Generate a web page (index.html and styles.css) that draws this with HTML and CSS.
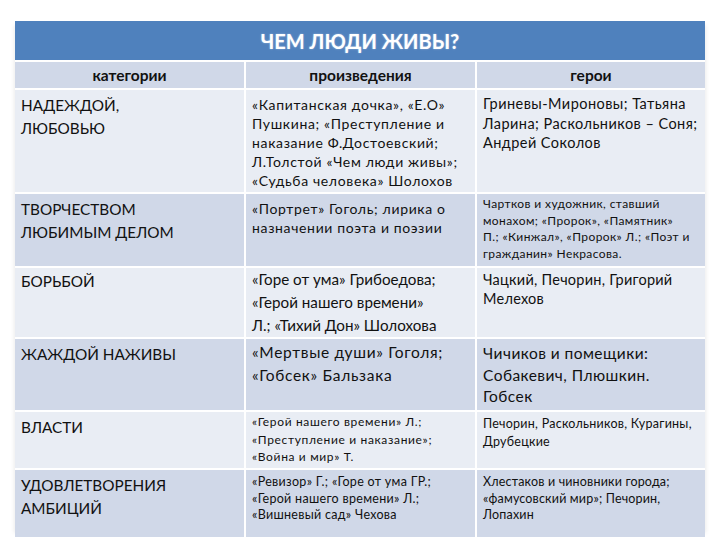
FILE: index.html
```html
<!DOCTYPE html>
<html lang="ru">
<head>
<meta charset="utf-8">
<title>Чем люди живы?</title>
<link rel="stylesheet" href="styles.css">
</head>
<body>
<div class="sheet">
  <div class="title">ЧЕМ ЛЮДИ ЖИВЫ?</div>
  <div class="head">категории</div>
  <div class="head">произведения</div>
  <div class="head">герои</div>

  <div class="cell light cat">НАДЕЖДОЙ,<br>ЛЮБОВЬЮ</div>
  <div class="cell light w-a">«Капитанская дочка», «Е.О»<br>Пушкина; «Преступление и<br>наказание Ф.Достоевский;<br>Л.Толстой «Чем люди живы»;<br>«Судьба человека» Шолохов</div>
  <div class="cell light h-a">Гриневы-Мироновы; Татьяна<br>Ларина; Раскольников – Соня;<br>Андрей Соколов</div>

  <div class="cell dark cat">ТВОРЧЕСТВОМ<br>ЛЮБИМЫМ ДЕЛОМ</div>
  <div class="cell dark w-a">«Портрет» Гоголь; лирика о<br>назначении поэта и поэзии</div>
  <div class="cell dark h-b">Чартков и художник, ставший<br>монахом; «Пророк», «Памятник»<br>П.; «Кинжал», «Пророк» Л.; «Поэт и<br>гражданин» Некрасова.</div>

  <div class="cell light cat up">БОРЬБОЙ</div>
  <div class="cell light w-c">«Горе от ума» Грибоедова;<br>«Герой нашего времени»<br>Л.; «Тихий Дон» Шолохова</div>
  <div class="cell light h-c">Чацкий, Печорин, Григорий<br>Мелехов</div>

  <div class="cell dark cat">ЖАЖДОЙ НАЖИВЫ</div>
  <div class="cell dark w-d">«Мертвые души» Гоголя;<br>«Гобсек» Бальзака</div>
  <div class="cell dark h-d">Чичиков и помещики:<br>Собакевич, Плюшкин.<br>Гобсек</div>

  <div class="cell light cat">ВЛАСТИ</div>
  <div class="cell light w-e">«Герой нашего времени» Л.;<br>«Преступление и наказание»;<br>«Война и мир» Т.</div>
  <div class="cell light h-e">Печорин, Раскольников, Курагины,<br>Друбецкие</div>

  <div class="cell dark cat">УДОВЛЕТВОРЕНИЯ<br>АМБИЦИЙ</div>
  <div class="cell dark w-f">«Ревизор» Г.; «Горе от ума ГР.;<br>«Герой нашего времени» Л.;<br>«Вишневый сад» Чехова</div>
  <div class="cell dark h-f">Хлестаков и чиновники города;<br>«фамусовский мир»; Печорин,<br>Лопахин</div>
</div>
</body>
</html>
```
FILE: styles.css
```css
html, body {
  margin: 0;
  padding: 0;
  background: #ffffff;
}
body {
  font-family: Lato, "Open Sans", "Liberation Sans", sans-serif;
  color: #111;
}
.sheet {
  margin: 21px 0 0 15px;
  width: 690px;
  display: grid;
  grid-template-columns: 229px 229px 228px;
  grid-template-rows: 39px 26px 102px 72px 69px 71px 56px 67px;
  gap: 2px 2px;
  background: #ffffff;
  box-shadow: -5px 0 4px -4px rgba(0,0,0,0.08), 5px 0 4px -4px rgba(0,0,0,0.08);
}
.title {
  grid-column: 1 / 4;
  background: #4f81bd;
  color: #ffffff;
  font-weight: bold;
  font-size: 20px;
  display: flex;
  align-items: center;
  justify-content: center;
  text-shadow: 0 0 2px rgba(255,255,255,0.45);
}
.head {
  background: #d0d8e8;
  font-weight: bold;
  font-size: 15.5px;
  display: flex;
  align-items: center;
  justify-content: center;
}
.cell {
  padding: 4px 6px 0 6px;
  box-sizing: border-box;
  overflow: hidden;
  white-space: nowrap;
}
.light { background: #e9edf4; }
.dark { background: #d0d8e8; }
.cat { font-size: 15.3px; line-height: 23px; }
.cat.up { padding-top: 2px; }

.w-a { font-size: 14px; letter-spacing: 0.65px; line-height: 19px; padding-top: 5px; }
.h-a { font-size: 14.5px; letter-spacing: 0.45px; line-height: 19.5px; padding-top: 4px; }
.h-b { font-size: 12px; letter-spacing: 0.4px; line-height: 16.5px; padding-top: 2px; }
.w-c { font-size: 15.2px; line-height: 23px; padding-top: 0; }
.h-c { font-size: 14.5px; letter-spacing: 0.25px; line-height: 19px; padding-top: 2px; }
.w-d { font-size: 15.5px; letter-spacing: 0.7px; line-height: 23px; padding-top: 2px; }
.h-d { font-size: 15.5px; letter-spacing: 0.45px; line-height: 21.5px; padding-top: 4px; }
.w-e { font-size: 12px; letter-spacing: 0.65px; line-height: 17.5px; padding-top: 1px; }
.h-e { font-size: 12.5px; letter-spacing: 0.25px; line-height: 18px; padding-top: 3px; }
.w-f { font-size: 12.5px; letter-spacing: 0.3px; line-height: 16.5px; padding-top: 4px; }
.h-f { font-size: 12.5px; letter-spacing: 0.17px; line-height: 16.5px; padding-top: 4px; }
```
